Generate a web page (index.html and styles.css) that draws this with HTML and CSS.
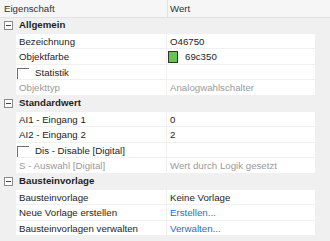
FILE: index.html
```html
<!DOCTYPE html>
<html lang="de">
<head>
    <meta charset="UTF-8">
    <title>Eigenschaften</title>
    <link rel="stylesheet" href="styles.css">
</head>
<body>
    <div class="header">
        <div class="head-name">Eigenschaft</div>
        <div class="head-value">Wert</div>
    </div>

    <div class="grid">
        <!-- Allgemein -->
        <div class="category"><span class="toggle"></span><span class="cat-label">Allgemein</span></div>
        <div class="row">
            <div class="name">Bezeichnung</div>
            <div class="value">O46750</div>
        </div>
        <div class="row">
            <div class="name">Objektfarbe</div>
            <div class="value"><span class="swatch"></span>69c350</div>
        </div>
        <div class="row">
            <div class="name"><span class="check"></span>Statistik</div>
            <div class="value"></div>
        </div>
        <div class="row disabled">
            <div class="name">Objekttyp</div>
            <div class="value">Analogwahlschalter</div>
        </div>

        <!-- Standardwert -->
        <div class="category"><span class="toggle"></span><span class="cat-label">Standardwert</span></div>
        <div class="row">
            <div class="name">AI1 - Eingang 1</div>
            <div class="value">0</div>
        </div>
        <div class="row">
            <div class="name">AI2 - Eingang 2</div>
            <div class="value">2</div>
        </div>
        <div class="row">
            <div class="name"><span class="check"></span>Dis - Disable [Digital]</div>
            <div class="value"></div>
        </div>
        <div class="row disabled">
            <div class="name">S - Auswahl [Digital]</div>
            <div class="value">Wert durch Logik gesetzt</div>
        </div>

        <!-- Bausteinvorlage -->
        <div class="category"><span class="toggle"></span><span class="cat-label">Bausteinvorlage</span></div>
        <div class="row">
            <div class="name">Bausteinvorlage</div>
            <div class="value">Keine Vorlage</div>
        </div>
        <div class="row">
            <div class="name">Neue Vorlage erstellen</div>
            <div class="value"><a class="link" href="#">Erstellen...</a></div>
        </div>
        <div class="row">
            <div class="name">Bausteinvorlagen verwalten</div>
            <div class="value"><a class="link" href="#">Verwalten...</a></div>
        </div>
    </div>
</body>
</html>
```

FILE: styles.css
```css
body {
    margin: 0;
    background: #f0f0f0;
    font-family: 'Liberation Sans', Arial, sans-serif;
    font-size: 9.7px;
    color: #1e1e1e;
    overflow: hidden;
}

.header {
    display: flex;
    height: 17px;
    background: #f6f6f6;
    border-bottom: 1px solid #e2e2e2;
    color: #333333;
}

.head-name {
    width: 163px;
    padding-left: 4px;
    border-right: 1px solid #e2e2e2;
    line-height: 18px;
}

.head-value {
    padding-left: 2px;
    line-height: 18px;
}

.grid {
    width: 315px;
}

.category,
.row {
    display: flex;
    height: 14.6px;
    margin-bottom: 1px;
    line-height: 16.6px;
}

.category {
    align-items: center;
}

.toggle {
    position: relative;
    box-sizing: border-box;
    width: 9px;
    height: 9px;
    margin: 1px 4px 0 4px;
    border: 1px solid #8a8a8a;
    background: #ffffff;
}

.toggle::after {
    content: '';
    position: absolute;
    left: 1px;
    top: 3px;
    width: 5px;
    height: 1px;
    background: #444444;
}

.cat-label {
    font-weight: bold;
    padding-left: 2px;
}

.name {
    width: 147px;
    margin-left: 16px;
    padding-left: 3px;
    background: #ffffff;
    white-space: nowrap;
    overflow: hidden;
}

.value {
    flex: 1;
    margin-left: 1px;
    padding-left: 3px;
    background: #ffffff;
    white-space: nowrap;
}

.disabled .name,
.disabled .value {
    color: #9a9a9a;
}

.check {
    display: inline-block;
    box-sizing: border-box;
    width: 12px;
    height: 12px;
    margin: 0 6px 0 -2px;
    vertical-align: -4px;
    border-top: 1px solid #6e6e6e;
    border-left: 1px solid #6e6e6e;
}

.swatch {
    display: inline-block;
    box-sizing: border-box;
    width: 10px;
    height: 12px;
    margin: 0 7px 0 -2px;
    vertical-align: -3px;
    background: #69c350;
    border: 1px solid #333333;
}

.link {
    color: #1c6fd1;
    text-decoration: none;
}
```
